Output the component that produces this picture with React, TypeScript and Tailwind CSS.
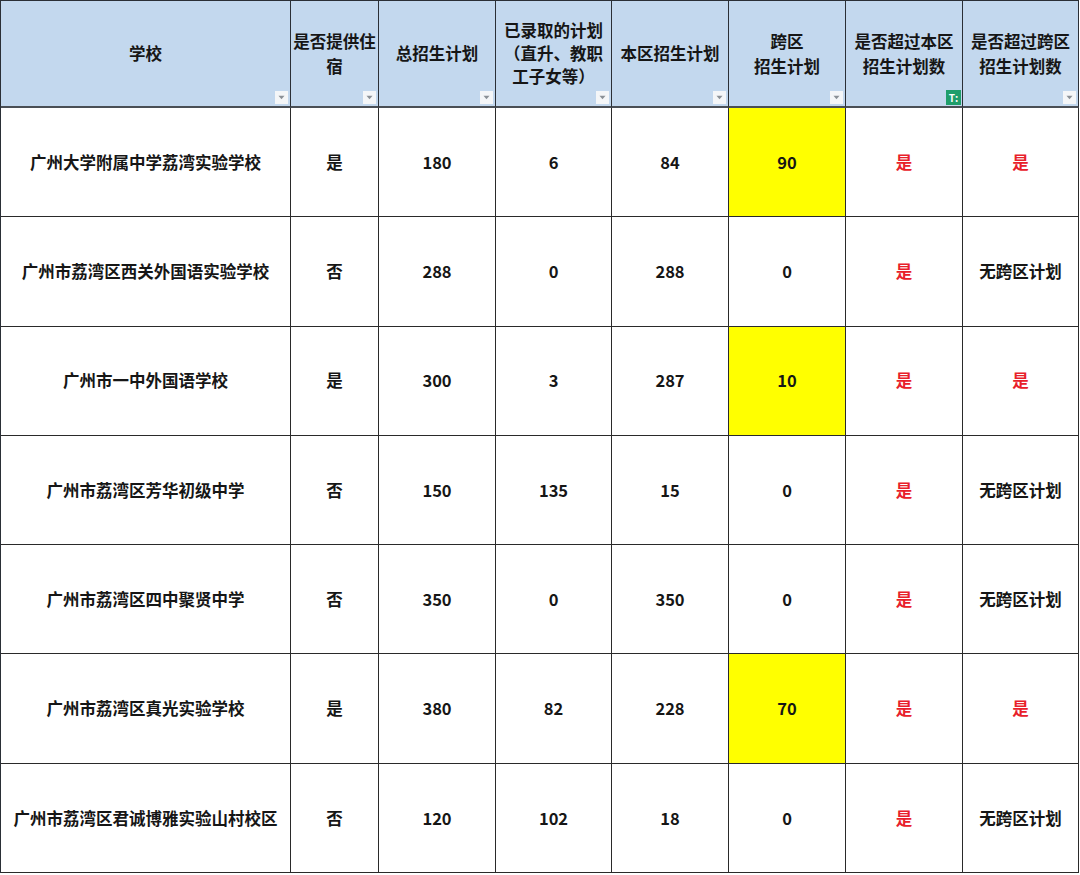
import React from "react";

const cols = "grid-cols-[290px_88px_117px_116px_117px_117px_117px_116px]";

type Row = {
  name: string;
  dorm: string;
  total: string;
  admitted: string;
  local: string;
  cross: string;
  yellow: boolean;
  overLocal: string;
  overCross: string;
};

const rows: Row[] = [
  { name: "广州大学附属中学荔湾实验学校", dorm: "是", total: "180", admitted: "6", local: "84", cross: "90", yellow: true, overLocal: "是", overCross: "是" },
  { name: "广州市荔湾区西关外国语实验学校", dorm: "否", total: "288", admitted: "0", local: "288", cross: "0", yellow: false, overLocal: "是", overCross: "无跨区计划" },
  { name: "广州市一中外国语学校", dorm: "是", total: "300", admitted: "3", local: "287", cross: "10", yellow: true, overLocal: "是", overCross: "是" },
  { name: "广州市荔湾区芳华初级中学", dorm: "否", total: "150", admitted: "135", local: "15", cross: "0", yellow: false, overLocal: "是", overCross: "无跨区计划" },
  { name: "广州市荔湾区四中聚贤中学", dorm: "否", total: "350", admitted: "0", local: "350", cross: "0", yellow: false, overLocal: "是", overCross: "无跨区计划" },
  { name: "广州市荔湾区真光实验学校", dorm: "是", total: "380", admitted: "82", local: "228", cross: "70", yellow: true, overLocal: "是", overCross: "是" },
  { name: "广州市荔湾区君诚博雅实验山村校区", dorm: "否", total: "120", admitted: "102", local: "18", cross: "0", yellow: false, overLocal: "是", overCross: "无跨区计划" },
];

function Drop() {
  return (
    <div className="absolute right-[2px] bottom-[2px] w-[13px] h-[13px] bg-[#f4f6f8] flex items-center justify-center">
      <svg width="7" height="5" viewBox="0 0 7 5">
        <path d="M0.5 0.8 L6.5 0.8 L3.5 4.2 Z" fill="#8a9096" />
      </svg>
    </div>
  );
}

function Filter() {
  return (
    <div className="absolute right-[1px] bottom-[1px] w-[15px] h-[15px] bg-[#1f9e6b] flex items-center justify-center text-white text-[10px] leading-none font-bold">
      T:
    </div>
  );
}

function H({ children, filter, tight }: { children: React.ReactNode; filter?: boolean; tight?: boolean }) {
  return (
    <div
      className={
        "relative bg-[#c3d8ee] border-r border-b-2 border-r-[#2a2f36] border-b-[#4a4f55] flex items-center justify-center text-center text-[16.5px] font-bold text-[#161616] whitespace-nowrap " +
        (tight ? "leading-[23px]" : "leading-[25px]")
      }
    >
      <div>{children}</div>
      {filter ? <Filter /> : <Drop />}
    </div>
  );
}

function C({ children, red, yellow }: { children: React.ReactNode; red?: boolean; yellow?: boolean }) {
  return (
    <div
      className={
        "border-r border-b border-[#2a2a2a] flex items-center justify-center text-center text-[16.5px] font-bold whitespace-nowrap " +
        (red ? "text-[#e8202a] " : "text-[#161616] ") +
        (yellow ? "bg-[#ffff00]" : "bg-white")
      }
    >
      {children}
    </div>
  );
}

export default function App() {
  return (
    <div
      className="w-[1080px] h-[875px] bg-white overflow-hidden"
      style={{ fontFamily: '"Noto Sans CJK SC", "Noto Sans", sans-serif' }}
    >
      <div className={`grid ${cols} grid-rows-[107px_repeat(7,109.3px)] border-l border-t border-[#2a2f36] w-[1079px]`}>
        <H>学校</H>
        <H>
          是否提供住
          <br />
          宿
        </H>
        <H>总招生计划</H>
        <H tight>
          已录取的计划
          <br />
          （直升、教职
          <br />
          工子女等）
        </H>
        <H>本区招生计划</H>
        <H>
          跨区
          <br />
          招生计划
        </H>
        <H filter>
          是否超过本区
          <br />
          招生计划数
        </H>
        <H>
          是否超过跨区
          <br />
          招生计划数
        </H>
        {rows.map((r, i) => (
          <React.Fragment key={i}>
            <C>{r.name}</C>
            <C>{r.dorm}</C>
            <C>{r.total}</C>
            <C>{r.admitted}</C>
            <C>{r.local}</C>
            <C yellow={r.yellow}>{r.cross}</C>
            <C red>{r.overLocal}</C>
            <C red={r.overCross === "是"}>{r.overCross}</C>
          </React.Fragment>
        ))}
      </div>
    </div>
  );
}
